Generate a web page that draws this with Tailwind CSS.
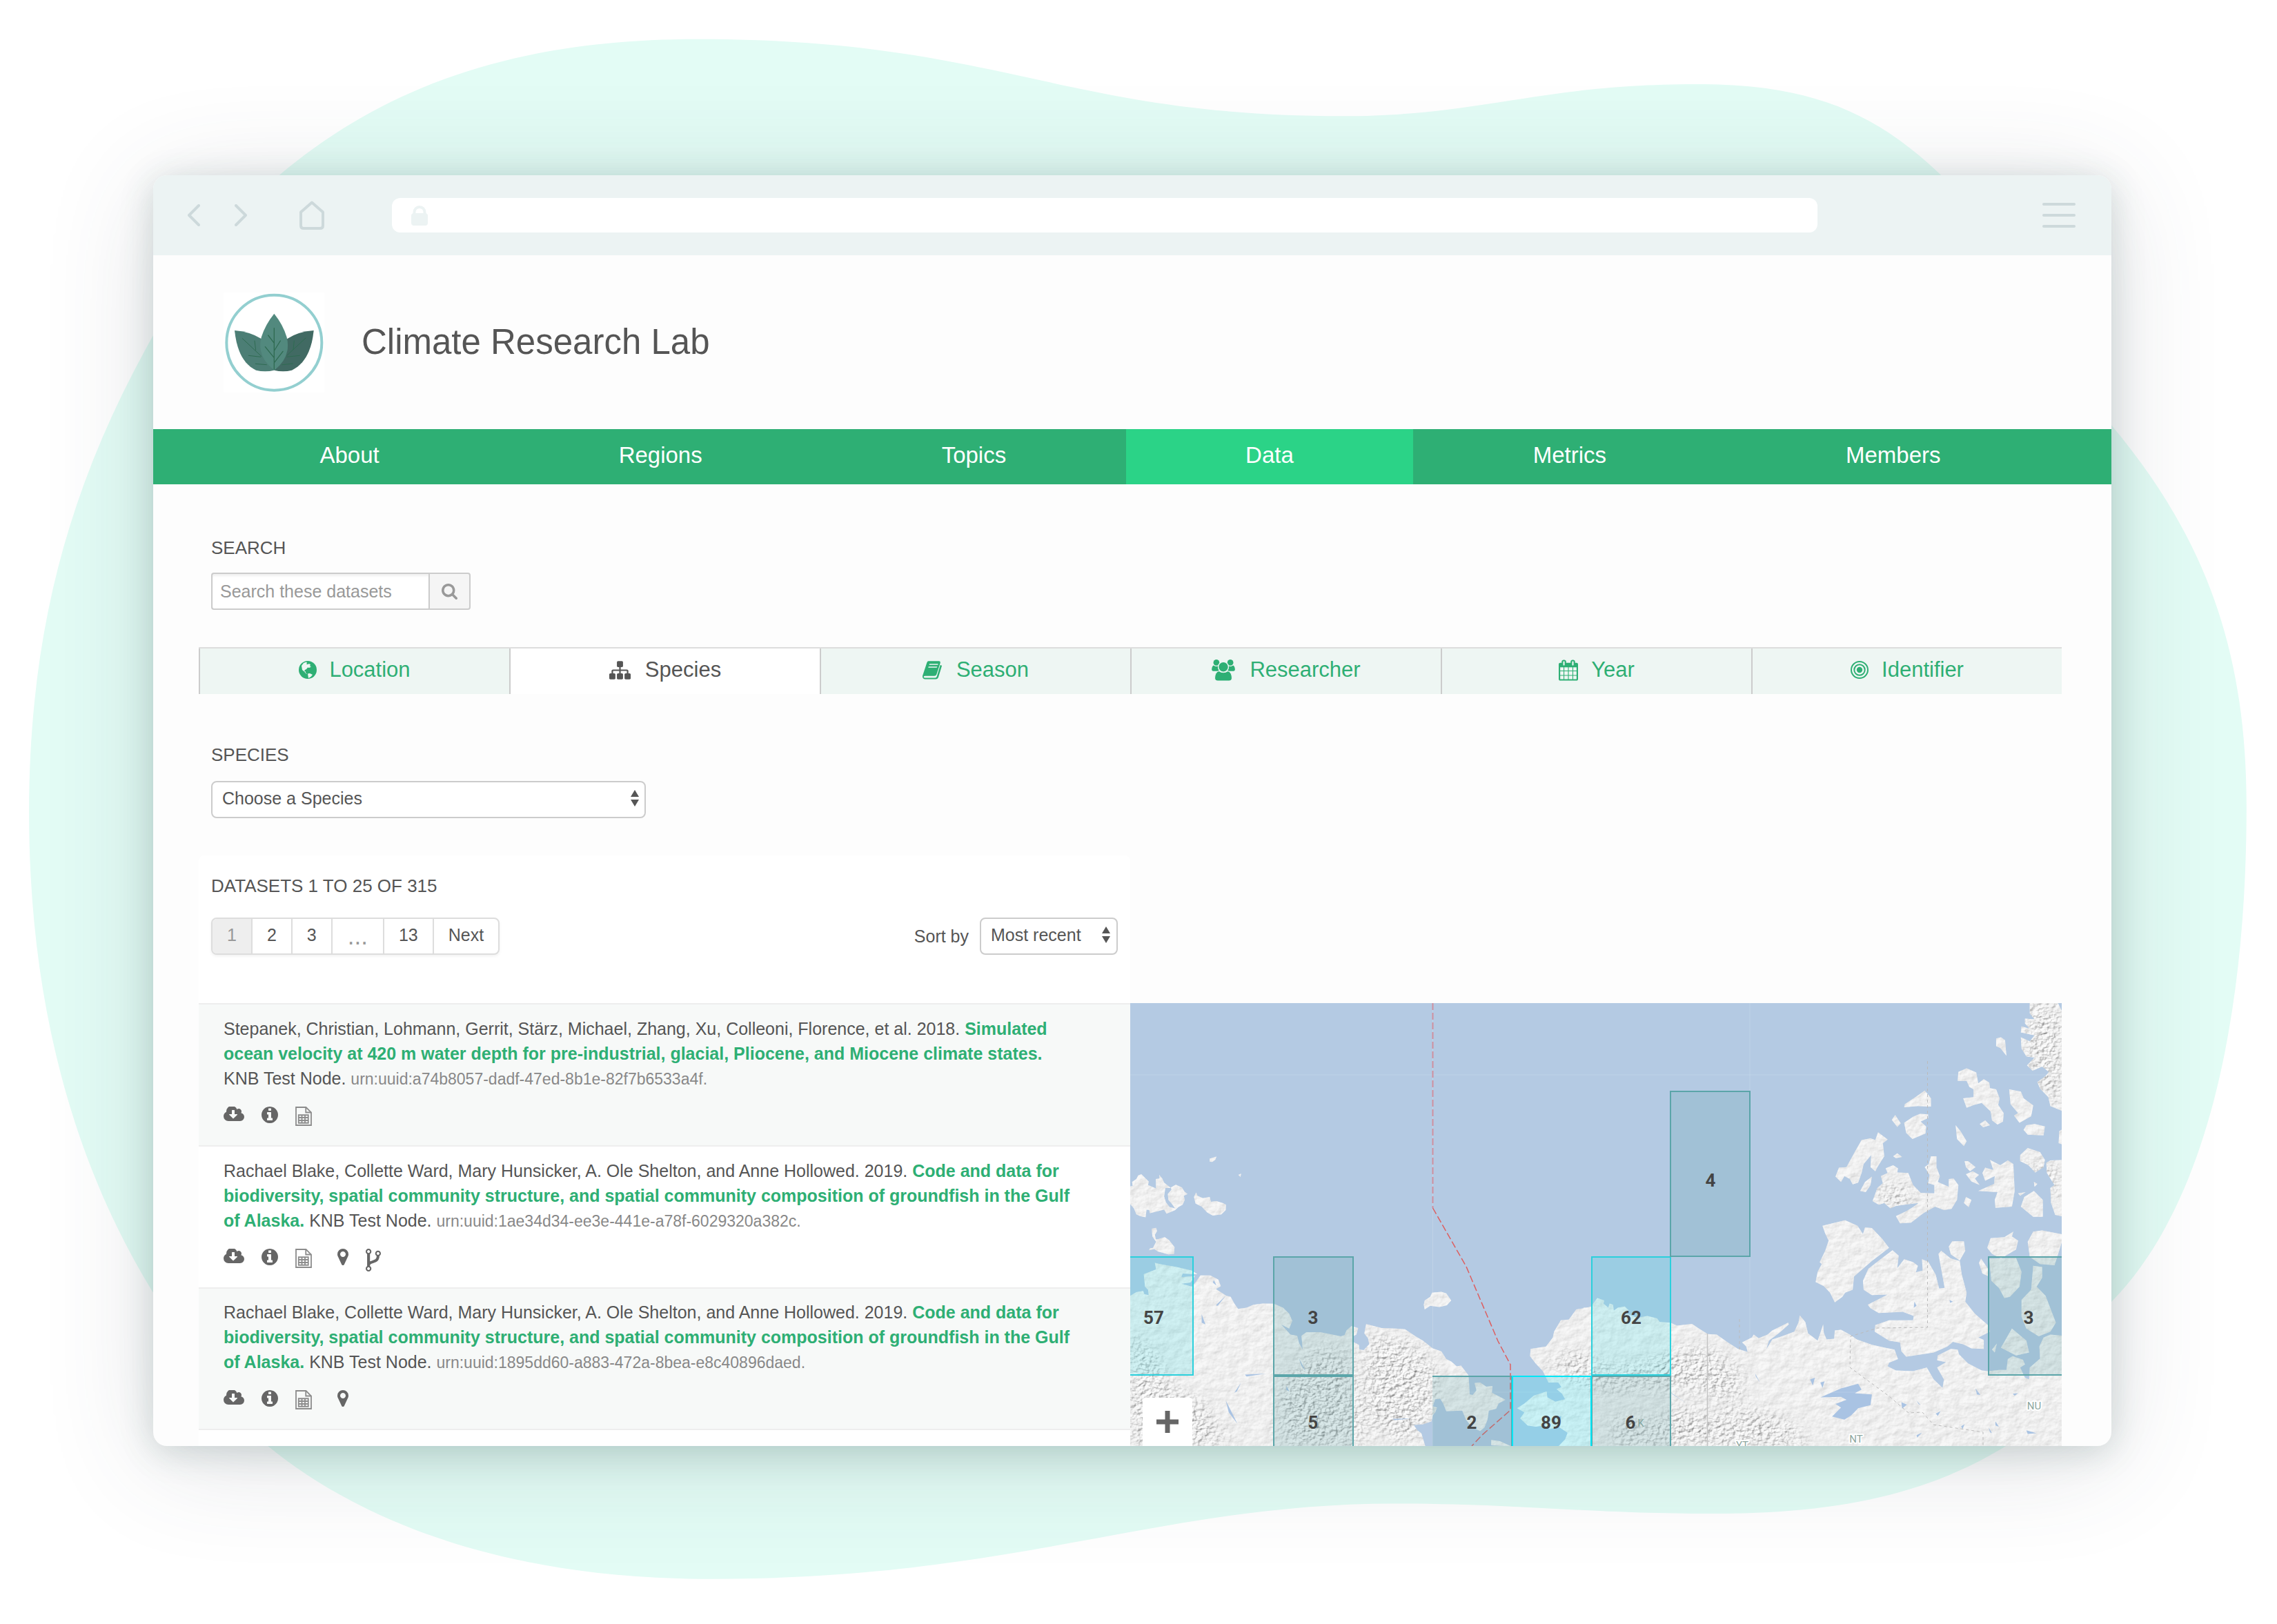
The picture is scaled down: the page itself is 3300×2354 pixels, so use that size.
<!DOCTYPE html>
<html lang="en">
<head>
<meta charset="utf-8">
<meta name="viewport" content="width=device-width, initial-scale=1">
<title>Climate Research Lab</title>
<script src="https://cdn.jsdelivr.net/npm/@tailwindcss/browser@4"></script>
</head>
<body class="bg-white text-[#555555] font-['Liberation_Sans',Arial,sans-serif] text-[25px] leading-[36px]">

<!-- Shared icon shapes -->
<svg class="hidden" aria-hidden="true">
  <symbol id="i-cloud" viewBox="-64 256 1920 1280"><path fill="currentColor" d="M1216 928q0-14-9-23t-23-9h-224v-352q0-13-9.500-22.500t-22.500-9.500h-192q-13 0-22.500 9.500t-9.500 22.500v352h-224q-13 0-22.500 9.500t-9.500 22.500q0 14 9 23l352 352q9 9 23 9t23-9l351-351q10-12 10-24zm640 224q0 159-112.500 271.500t-271.500 112.500h-1088q-185 0-316.500-131.500t-131.500-316.500q0-130 70-240t188-165q-2-30-2-43 0-212 150-362t362-150q156 0 285.500 87t188.500 231q71-62 166-62 106 0 181 75t75 181q0 76-41 138 130 31 213.500 135.500t83.500 238.500z"/></symbol>
  <symbol id="i-info" viewBox="128 128 1536 1536"><path fill="currentColor" d="M1152 1376v-160q0-14-9-23t-23-9h-96v-512q0-14-9-23t-23-9h-320q-14 0-23 9t-9 23v160q0 14 9 23t23 9h96v320h-96q-14 0-23 9t-9 23v160q0 14 9 23t23 9h448q14 0 23-9t9-23zm-128-896v-160q0-14-9-23t-23-9h-192q-14 0-23 9t-9 23v160q0 14 9 23t23 9h192q14 0 23-9t9-23zm640 416q0 209-103 385.500t-279.500 279.500-385.500 103-385.500-103-279.500-279.500-103-385.500 103-385.500 279.500-279.500 385.500-103 385.500 103 279.500 279.500 103 385.500z"/></symbol>
  <symbol id="i-file" viewBox="0 0 24 28"><g fill="none" stroke="#8c8c8c" stroke-width="1.800"><path d="M1 1h14.500l7.500 7.500v18.500H1z"/><path d="M15.250 1v7.500h8"/><path d="M4.750 12.250h14v11.500h-14zM4.750 16h14M4.750 20h14M9.500 12.250v11.500M14 12.250v11.500"/></g></symbol>
  <symbol id="i-pin" viewBox="384 128 1024 1536"><path fill="currentColor" d="M1152 640q0-106-75-181t-181-75-181 75-75 181 75 181 181 75 181-75 75-181zm256 0q0 109-33 179l-364 774q-16 33-47.500 52t-67.500 19-67.500-19-46.500-52l-365-774q-33-70-33-179 0-212 150-362t362-150 362 150 150 362z"/></symbol>
  <symbol id="i-fork" viewBox="384 128 1024 1536"><path fill="currentColor" d="M672 1472q0-40-28-68t-68-28-68 28-28 68 28 68 68 28 68-28 28-68zm0-1152q0-40-28-68t-68-28-68 28-28 68 28 68 68 28 68-28 28-68zm640 128q0-40-28-68t-68-28-68 28-28 68 28 68 68 28 68-28 28-68zm96 0q0 52-26 96.500t-70 69.500q-2 287-226 414-67 38-203 81-128 40-169.500 71t-41.500 100v26q44 25 70 69.500t26 96.500q0 80-56 136t-136 56-136-56-56-136q0-52 26-96.500t70-69.500v-820q-44-25-70-69.500t-26-96.500q0-80 56-136t136-56 136 56 56 136q0 52-26 96.500t-70 69.500v497q54-26 154-57 55-17 87.500-29.500t70.500-31 59-39.500 40.500-51 28-69.500 8.500-91.500q-44-25-70-69.500t-26-96.500q0-80 56-136t136-56 136 56 56 136z"/></symbol>
  <symbol id="i-updown" viewBox="0 0 12 24"><path fill="#555" d="M6 0l6 10H0zM6 24L0 14h12z"/></symbol>
</svg>

<div class="relative isolate min-h-screen overflow-hidden pt-[254px] pb-[258px] pl-[222px] pr-[240px]">

  <!-- Backdrop blob -->
  <svg class="absolute inset-0 -z-10 h-full w-full" viewBox="0 0 1568 1119" preserveAspectRatio="none" aria-hidden="true">
    <path fill="#e3fcf5" d="M192 121 C262 62 350 27 480 27 C690 27 730 80 925 80 C1020 80 1060 58 1168 58 C1245 58 1290 76 1337 121 C1385 166 1405 236 1454 293 C1520 372 1547 450 1547 556 C1547 700 1520 830 1454 897 C1428 940 1410 972 1382 996 C1330 1028 1270 1043 1180 1043 C1090 1043 1050 1036 960 1036 C800 1036 700 1088 490 1088 C350 1088 250 1050 184 996 C150 960 135 930 105 890 C50 800 20 690 20 560 C20 430 50 330 105 232 C130 190 155 155 192 121Z"/>
  </svg>

  <div class="overflow-hidden rounded-[20px] bg-[#fdfdfd] shadow-[0_8px_50px_rgba(40,80,75,0.2),0_20px_160px_rgba(60,70,90,0.16)]">

    <!-- Browser toolbar -->
    <div class="flex h-[116px] items-center bg-[#ecf3f3] pl-[50px] pr-[52px] text-[#cdd9db]">
      <button type="button" aria-label="Back"><svg class="h-8 w-[18px]" viewBox="0 0 18 32" fill="none" stroke="currentColor" stroke-width="4" stroke-linecap="round" stroke-linejoin="round"><path d="M16 2L2 16l14 14"/></svg></button>
      <button type="button" aria-label="Forward" class="ml-[50px]"><svg class="h-8 w-[18px]" viewBox="0 0 18 32" fill="none" stroke="currentColor" stroke-width="4" stroke-linecap="round" stroke-linejoin="round"><path d="M2 2l14 14L2 30"/></svg></button>
      <button type="button" aria-label="Home" class="ml-[76px]"><svg class="h-[42px] w-9" viewBox="0 0 36 42" fill="none" stroke="currentColor" stroke-width="4" stroke-linejoin="round"><path d="M18 2.500L2 16.500V36q0 4 4 4h24q4 0 4-4V16.500z"/></svg></button>
      <div class="ml-[98px] mr-[326px] flex h-[50px] flex-1 items-center rounded-xl bg-white pl-7">
        <svg class="h-[30px] w-6" viewBox="0 0 24 30" fill="none"><rect y="12" width="24" height="18" rx="4" fill="#ecf3f3"/><path d="M4.500 16V10.500a7.500 7.500 0 0 1 15 0V16" stroke="#ecf3f3" stroke-width="4"/></svg>
        <input type="text" aria-label="Address" class="h-full flex-1 px-4 outline-none">
      </div>
      <button type="button" aria-label="Menu" class="flex w-12 flex-col gap-3"><span class="h-1 rounded-full bg-current"></span><span class="h-1 rounded-full bg-current"></span><span class="h-1 rounded-full bg-current"></span></button>
    </div>

    <!-- Site header -->
    <header class="flex h-[252px] items-center gap-[54px] pl-[102px]">
      <svg class="h-[145px] w-[146px]" viewBox="41 40 438 435" role="img" aria-label="Leaf logo">
        <rect x="41" y="40" width="438" height="435" fill="#fff"/>
        <circle cx="261" cy="258" r="207" fill="#fff" stroke="#93cfd0" stroke-width="12"/>
        <path fill="#416a63" d="M433 205Q365 210 318 241L261 378Q300 388 338 378C395 350 425 290 433 205Z"/>
        <path fill="#4c7e75" d="M89 205Q155 210 205 241L261 378Q222 388 182 378C125 350 98 290 89 205Z"/>
        <path fill="#52897e" d="M261 132Q300 180 316 235Q336 320 262 378Q184 320 205 235Q222 180 261 132Z"/>
        <g fill="none" stroke="#2f6b52" stroke-width="4" stroke-linecap="round"><path d="M261 195V374M261 260L235 226M261 324L222 276M262 292L288 250M262 344L299 296"/><path d="M123 240L206 318M181 290L176 250M202 320L150 314M228 354L180 350" stroke-width="3"/><path d="M398 238L316 314M344 288L348 250M316 320L372 314M296 354L342 349" stroke-width="3"/></g>
      </svg>
      <h1 class="text-[51px] leading-[60px]">Climate Research Lab</h1>
    </header>

    <!-- Main navigation -->
    <nav class="flex h-20 bg-[#2eaf74] pl-[68px] pr-[74px] text-[33px] leading-[40px] text-white">
      <a href="#" class="flex flex-auto items-center justify-center pb-1">About</a>
      <a href="#" class="flex flex-auto items-center justify-center pb-1">Regions</a>
      <a href="#" class="flex flex-auto items-center justify-center pb-1">Topics</a>
      <a href="#" aria-current="page" class="flex flex-auto items-center justify-center bg-[#2bd387] pb-1">Data</a>
      <a href="#" class="flex flex-auto items-center justify-center pb-1">Metrics</a>
      <a href="#" class="flex flex-auto items-center justify-center pb-1">Members</a>
    </nav>

    <main class="pt-[76px] pl-[66px] pr-[72px]">
      <!-- Search -->
      <form class="px-[18px]">
        <label for="q" class="mb-5 block text-[26px] leading-8">SEARCH</label>
        <div class="flex h-[54px]">
          <input id="q" type="text" placeholder="Search these datasets" class="w-[315px] rounded-l border-2 border-r-0 border-[#cccccc] bg-white pl-[11px] shadow-[inset_0_3px_3px_rgba(0,0,0,0.06)] outline-none placeholder:text-[#999999]">
          <button type="submit" aria-label="Search" class="flex w-[61px] items-center justify-center rounded-r border-2 border-[#cccccc] bg-[#f5f5f5] text-[#999999]">
            <svg class="h-[23px] w-[23px]" viewBox="64 128 1664 1664"><path fill="currentColor" d="M1216 832q0-185-131.500-316.500t-316.500-131.500-316.500 131.500-131.500 316.500 131.500 316.500 316.500 131.500 316.500-131.500 131.500-316.500zm512 832q0 52-38 90t-90 38q-54 0-90-38l-343-342q-179 124-399 124-143 0-273.500-55.500t-225-150-150-225-55.500-273.500 55.500-273.500 150-225 225-150 273.500-55.500 273.500 55.500 225 150 150 225 55.500 273.500q0 220-124 399l343 343q37 37 37 90z"/></svg>
          </button>
        </div>
      </form>

      <!-- Filter tabs -->
      <div role="tablist" class="mt-[54px] grid h-[68px] grid-cols-6 border-t-2 border-[#dddddd] text-[31px] leading-[40px] text-[#2eaf74]">
        <button type="button" role="tab" class="flex items-center justify-center gap-[18px] border-l-2 border-[#cccccc] bg-[#eef6f3] pb-1">
          <svg class="h-[26px] w-[26px]" viewBox="0 0 26 26"><circle cx="13" cy="13" r="13" fill="currentColor"/><path fill="#eef6f3" d="M4 7l3-4 4-1.500 1 1.500-1 1.500 2 .5 2-1 2 1.500-1 2 2 1-3 1.500-2-.5-2 2.500-2 1-1 2 2 .5 0 2 1.500.5L11 19l-3-3.500L5 13z"/><path fill="#eef6f3" d="M13 18.500l3-.5 4 2-2.500 3L14 25z"/></svg>Location</button>
        <button type="button" role="tab" aria-selected="true" class="flex items-center justify-center gap-[21px] border-l-2 border-[#cccccc] bg-white pb-1 text-[#555555]">
          <svg class="h-[27px] w-[31px]" viewBox="0 128 1792 1536"><path fill="currentColor" d="M1792 1248v320q0 40-28 68t-68 28h-320q-40 0-68-28t-28-68v-320q0-40 28-68t68-28h96v-192h-512v192h96q40 0 68 28t28 68v320q0 40-28 68t-68 28h-320q-40 0-68-28t-28-68v-320q0-40 28-68t68-28h96v-192h-512v192h96q40 0 68 28t28 68v320q0 40-28 68t-68 28h-320q-40 0-68-28t-28-68v-320q0-40 28-68t68-28h96v-192q0-52 38-90t90-38h512v-192h-96q-40 0-68-28t-28-68v-320q0-40 28-68t68-28h320q40 0 68 28t28 68v320q0 40-28 68t-68 28h-96v192h512q52 0 90 38t38 90v192h96q40 0 68 28t28 68z"/></svg>Species</button>
        <button type="button" role="tab" class="flex items-center justify-center gap-[21px] border-l-2 border-[#cccccc] bg-[#eef6f3] pb-1">
          <svg class="h-[27px] w-7" viewBox="0 0 84 80"><path fill="currentColor" d="M26 0h46q7 1 5 9L61 58q-2 7-10 7H10q-6 1-5 5 1 3 6 3h44q5 0 7-5L77 18q4-1 7 3L69 70q-3 9-12 9H12Q-1 78 0 65L19 7Q21 0 26 0z"/><path fill="#eef6f3" d="M30 12h38l-1 5H29zM26 24h38l-2 5H25z"/></svg>Season</button>
        <button type="button" role="tab" class="flex items-center justify-center gap-[21px] border-l-2 border-[#cccccc] bg-[#eef6f3] pb-1">
          <svg class="h-[31px] w-[34px]" viewBox="0 0 100 92"><g fill="currentColor"><circle cx="20" cy="13" r="13"/><circle cx="80" cy="13" r="13"/><path d="M8 25q12 8 20 2-3 16 8 23H10Q0 50 0 42q1-14 8-17zM92 25q-12 8-20 2 3 16-8 23h26q10 0 10-8-1-14-8-17z"/></g><circle cx="50" cy="32" r="22" fill="currentColor" stroke="#eef6f3" stroke-width="4"/><path fill="currentColor" stroke="#eef6f3" stroke-width="3" d="M31 49q19 13 38 0 17 4 18 30 0 13-12 13H25q-12 0-12-13 1-26 18-30z"/></svg>Researcher</button>
        <button type="button" role="tab" class="flex items-center justify-center gap-[19px] border-l-2 border-[#cccccc] bg-[#eef6f3] pb-1">
          <svg class="h-[31px] w-7" viewBox="64 0 1664 1792"><path fill="currentColor" d="M192 1664h288v-288h-288v288zm352 0h320v-288h-320v288zm-352-352h288v-320h-288v320zm352 0h320v-320h-320v320zm-352-384h288v-288h-288v288zm736 736h320v-288h-320v288zm-384-736h320v-288h-320v288zm768 736h288v-288h-288v288zm-384-352h320v-320h-320v320zm-352-864v-288q0-13-9.500-22.500t-22.500-9.500h-64q-13 0-22.500 9.500t-9.500 22.500v288q0 13 9.500 22.500t22.500 9.500h64q13 0 22.500-9.500t9.500-22.500zm736 864h288v-320h-288v320zm-384-384h320v-288h-320v288zm384 0h288v-288h-288v288zm32-480v-288q0-13-9.500-22.500t-22.500-9.500h-64q-13 0-22.500 9.500t-9.500 22.500v288q0 13 9.500 22.500t22.500 9.500h64q13 0 22.500-9.500t9.500-22.500zm384-64v1280q0 52-38 90t-90 38h-1408q-52 0-90-38t-38-90v-1280q0-52 38-90t90-38h128v-96q0-66 47-113t113-47h64q66 0 113 47t47 113v96h384v-96q0-66 47-113t113-47h64q66 0 113 47t47 113v96h128q52 0 90 38t38 90z"/></svg>Year</button>
        <button type="button" role="tab" class="flex items-center justify-center gap-[19px] border-l-2 border-[#cccccc] bg-[#eef6f3] pb-1">
          <svg class="h-[26px] w-[26px]" viewBox="0 0 26 26" fill="none" stroke="currentColor" stroke-width="2"><circle cx="13" cy="13" r="12"/><circle cx="13" cy="13" r="7.700"/><circle cx="13" cy="13" r="4.200" fill="currentColor" stroke="none"/></svg>Identifier</button>
      </div>

      <!-- Species picker -->
      <div class="px-[18px] pt-[72px]">
        <label for="species" class="mb-[22px] block text-[26px] leading-8">SPECIES</label>
        <div class="relative w-[630px]">
          <select id="species" class="h-[54px] w-full appearance-none rounded-lg border-2 border-[#cccccc] bg-white pb-1 pl-[14px] outline-none"><option>Choose a Species</option></select>
          <svg class="pointer-events-none absolute top-[13px] right-[10px] h-6 w-3" aria-hidden="true"><use href="#i-updown"/></svg>
        </div>
      </div>

      <!-- Results and map -->
      <div class="mt-[54px] grid grid-cols-2">
        <section class="rounded-t-lg bg-white">
          <div class="px-[18px] pt-7 pb-[70px]">
            <h2 class="mb-[30px] text-[26px] leading-8">DATASETS 1 TO 25 OF 315</h2>
            <div class="flex items-center justify-between">
              <nav aria-label="Pages" class="flex h-[54px] divide-x-2 divide-[#dddddd] overflow-hidden rounded-lg border-2 border-[#dddddd] bg-white shadow-[0_2px_4px_rgba(0,0,0,0.06)]">
                <a href="#" aria-current="page" class="flex items-center bg-[#eeeeee] px-[21px] pb-1 text-[#999999]">1</a>
                <a href="#" class="flex items-center px-[21px] pb-1">2</a>
                <a href="#" class="flex items-center px-[21px] pb-1">3</a>
                <span class="flex items-center px-[22px] text-[35px] text-[#999999]">...</span>
                <a href="#" class="flex items-center px-[21px] pb-1">13</a>
                <a href="#" class="flex items-center px-[21px] pb-1">Next</a>
              </nav>
              <div class="flex items-center gap-4">
                <label for="sort">Sort by</label>
                <div class="relative w-[200px]">
                  <select id="sort" class="h-[54px] w-full appearance-none rounded-lg border-2 border-[#cccccc] bg-white pb-1 pl-[14px] outline-none"><option>Most recent</option></select>
                  <svg class="pointer-events-none absolute top-[13px] right-[11px] h-6 w-3" aria-hidden="true"><use href="#i-updown"/></svg>
                </div>
              </div>
            </div>
          </div>

          <ul class="border-b-2 border-[#eeeeee]">
            <li class="border-t-2 border-[#eeeeee] bg-[#f7f9f8] px-9 pt-[17px] pb-6">
              <p>Stepanek, Christian, Lohmann, Gerrit, Stärz, Michael, Zhang, Xu, Colleoni, Florence, et al. 2018. <a href="#" class="font-bold text-[#2eaf74]">Simulated<br>ocean velocity at 420 m water depth for pre-industrial, glacial, Pliocene, and Miocene climate states.</a><br>KNB Test Node. <span class="text-[23px] leading-none text-[#888888]">urn:uuid:a74b8057-dadf-47ed-8b1e-82f7b6533a4f.</span></p>
              <div class="mt-[23px] flex h-8 items-start gap-[25px] text-[#666666]">
                <button type="button" aria-label="Download"><svg class="h-[22px] w-[30px]"><use href="#i-cloud"/></svg></button>
                <button type="button" aria-label="Details"><svg class="h-6 w-6"><use href="#i-info"/></svg></button>
                <button type="button" aria-label="Data table"><svg class="h-7 w-6"><use href="#i-file"/></svg></button>
              </div>
            </li>
            <li class="border-t-2 border-[#eeeeee] bg-white px-9 pt-[17px] pb-6">
              <p>Rachael Blake, Collette Ward, Mary Hunsicker, A. Ole Shelton, and Anne Hollowed. 2019. <a href="#" class="font-bold text-[#2eaf74]">Code and data for<br>biodiversity, spatial community structure, and spatial community composition of groundfish in the Gulf<br>of Alaska.</a> KNB Test Node. <span class="text-[23px] leading-none text-[#888888]">urn:uuid:1ae34d34-ee3e-441e-a78f-6029320a382c.</span></p>
              <div class="mt-[23px] flex h-8 items-start gap-[25px] text-[#666666]">
                <button type="button" aria-label="Download"><svg class="h-[22px] w-[30px]"><use href="#i-cloud"/></svg></button>
                <button type="button" aria-label="Details"><svg class="h-6 w-6"><use href="#i-info"/></svg></button>
                <button type="button" aria-label="Data table"><svg class="h-7 w-6"><use href="#i-file"/></svg></button>
                <button type="button" aria-label="Location" class="ml-3"><svg class="h-6 w-4"><use href="#i-pin"/></svg></button>
                <button type="button" aria-label="Provenance"><svg class="h-[33px] w-[22px]"><use href="#i-fork"/></svg></button>
              </div>
            </li>
            <li class="border-t-2 border-[#eeeeee] bg-[#f7f9f8] px-9 pt-4 pb-6">
              <p>Rachael Blake, Collette Ward, Mary Hunsicker, A. Ole Shelton, and Anne Hollowed. 2019. <a href="#" class="font-bold text-[#2eaf74]">Code and data for<br>biodiversity, spatial community structure, and spatial community composition of groundfish in the Gulf<br>of Alaska.</a> KNB Test Node. <span class="text-[23px] leading-none text-[#888888]">urn:uuid:1895dd60-a883-472a-8bea-e8c40896daed.</span></p>
              <div class="mt-[23px] flex h-8 items-start gap-[25px] text-[#666666]">
                <button type="button" aria-label="Download"><svg class="h-[22px] w-[30px]"><use href="#i-cloud"/></svg></button>
                <button type="button" aria-label="Details"><svg class="h-6 w-6"><use href="#i-info"/></svg></button>
                <button type="button" aria-label="Data table"><svg class="h-7 w-6"><use href="#i-file"/></svg></button>
                <button type="button" aria-label="Location" class="ml-3"><svg class="h-6 w-4"><use href="#i-pin"/></svg></button>
              </div>
            </li>
          </ul>
          <div class="h-[23px]"></div>
        </section>

        <section class="flex flex-col pt-[214px]" aria-label="Map">
          <div class="relative flex-1 overflow-hidden bg-[#b4cae3]">
            <svg class="absolute inset-0 h-full w-full" viewBox="0 0 1350 642" preserveAspectRatio="xMinYMin slice" role="img" aria-label="Dataset counts by region">
              <defs>
                <path id="west" transform="matrix(.44643 0 0 .43367 -17.86 -13.88)" d="M40 645L48 643 46 630 60 620 66 608 76 604 88 616 100 628 98 640 124 652 123 620 135 618 134 606 144 618 150 632 162 642 172 650 154 650 150 678 156 698 168 714 186 718 176 704 164 690 162 670 174 656 172 648 188 639 208 648 216 662 226 670 214 676 217 690 210 706 196 714 186 724 158 736 150 722 120 730 104 734 102 724 93 722 90 748 72 744 60 738 52 718 40 704ZM247 680L254 665 258 676 276 684 298 680 302 696 320 694 340 700 351 706 350 724 336 738 308 742 290 732 272 712 252 702ZM298 552L320 545 316 556 306 563 298 562ZM391 606L400 602 398 613ZM110 786L124 783 127 794 120 806 123 822 134 820 152 814 166 824 184 848 182 870 164 872 130 862 118 854 101 858 104 852 114 850 124 830 112 812ZM40 1010L60 998 82 994 86 1005 100 1008 98 990 88 980 84 938 104 930 124 922 120 900 144 906 190 914 240 926 258 938 210 936 206 948 250 944 236 966 206 970 240 980 252 966 268 942 300 942 326 956 334 978 318 988 352 1010 366 1014 378 1036 390 1054 418 1050 440 1040 470 1036 506 1037 536 1050 556 1070 566 1094 556 1120 530 1106 548 1126 560 1140 582 1144 588 1168 600 1190 596 1144 612 1132 656 1132 724 1146 736 1142 742 1126 758 1112 780 1118 774 1140 764 1146 766 1166 782 1174 784 1190 798 1192 816 1172 812 1152 800 1136 806 1105 856 1118 900 1120 932 1122 966 1146 990 1160 1022 1186 1050 1196 1066 1222 1082 1230 1100 1246 1114 1244 1138 1276 1140 1300 1142 1340 1152 1342 1164 1326 1158 1302 1176 1300 1196 1314 1216 1312 1214 1334 1258 1358 1236 1370 1228 1388 1204 1394 1200 1424 1190 1450 1176 1462 1150 1450 1130 1424 1118 1394 1066 1396 1056 1370 1046 1354 1030 1356 1022 1380 1036 1384 1030 1400 1022 1410 1018 1430 990 1440 960 1442 972 1460 985 1470 1000 1520L40 1520ZM993 1040L996 1026 1014 1014 1020 1000 1050 997 1066 1002 1082 1026 1068 1042 1044 1048 1014 1044 996 1056ZM1212 1492L1240 1496 1276 1513 1212 1510ZM1560 1040L1538 1048 1488 1056 1464 1090 1438 1092 1416 1130 1412 1150 1390 1180 1340 1188 1338 1212 1356 1236 1380 1262 1398 1300 1430 1300 1440 1316 1424 1322 1442 1338 1452 1356 1420 1364 1394 1350 1392 1330 1350 1344 1318 1372 1296 1386 1320 1400 1306 1420 1330 1444 1356 1448 1384 1444 1402 1456 1430 1448 1460 1468 1452 1490 1424 1520 1560 1520Z"/>
                <path id="east" transform="matrix(.49745 0 0 .43367 662 -13.88)" d="M0 1050L12 1046 30 1018 50 1026 48 1036 62 1050 66 1036 76 1040 78 1060 90 1050 110 1046 122 1060 116 1070 146 1084 176 1078 204 1086 212 1098 243 1100 262 1110 306 1104 326 1120 352 1138 378 1140 410 1166 440 1188 468 1198 464 1180 452 1166 480 1150 486 1140 500 1152 526 1140 540 1126 586 1100 588 1106 560 1134 530 1160 522 1190 540 1156 568 1146 604 1130 616 1100 620 1076 636 1098 644 1136 660 1150 672 1160 680 1134 688 1106 690 1134 698 1156 720 1154 722 1126 740 1124 766 1140 786 1156 830 1174 868 1184 896 1190 906 1222 880 1234 876 1246 900 1260 950 1262 990 1250 1010 1290 1036 1318 1040 1290 1020 1250 1046 1232 1020 1226 1022 1210 1060 1188 1080 1190 1084 1206 1110 1236 1150 1260 1170 1262 1200 1258 1222 1258 1226 1222 1240 1212 1270 1224 1276 1240 1262 1250 1276 1284 1288 1290 1290 1250 1320 1220 1318 1180 1330 1150 1350 1140 1400 1145V1530H-10V1050ZM806 990L804 960 820 920 860 884 890 858 908 876 904 918 924 888 950 898 964 910 958 932 978 926 976 888 994 896 1016 940 1026 986 1042 984 1024 870 1032 860 1060 886 1086 894 1092 940 1106 1000 1102 1030 1130 1070 1168 1108 1174 1130 1140 1150 1156 1158 1156 1188 1120 1186 1096 1172 1066 1164 1050 1180 1010 1200 930 1214 916 1196 912 1166 880 1160 838 1130 840 1108 880 1092 950 1092 952 1078 920 1064 850 1068 826 1052 818 1040 876 1006 830 1008ZM686 776L752 758 788 776 804 804 810 782 830 784 860 820 880 850 830 894 800 924 778 946 774 990 752 1000 744 1014 722 1032 708 1000 690 978 666 964 672 930 684 904 678 898 694 860 704 826 694 802ZM724 612L734 582 756 580 780 530 800 490 826 484 840 490 848 464 876 488 862 500 866 544 846 580 840 594 826 580 828 540 806 570 800 600 790 632 774 638 766 620 750 610 740 630ZM832 694L846 650 862 634 856 610 876 600 870 584 892 574 906 584 904 598 936 600 950 640 972 666 1012 668 1012 640 994 634 998 606 984 580 996 570 1002 544 1018 544 1018 580 1028 610 1022 630 1054 646 1054 620 1068 618 1082 640 1078 690 1062 720 1040 724 1014 712 980 734 944 766 912 768 900 744 930 728 952 712 966 700 936 704 900 710 884 718 866 700 850 706ZM926 370L960 344 984 324 1002 350 1002 378 964 376 924 380ZM924 432L950 412 970 402 994 404 994 416 972 428 988 444 986 468 948 486 930 466ZM888 422L898 406 914 434 904 446ZM796 660L810 630 830 612 826 640 812 664ZM892 544L904 534 918 546 900 550ZM1080 292L1082 262 1106 250 1134 264 1140 300 1156 286 1172 298 1174 316 1192 320 1202 350 1198 372 1214 400 1212 428 1196 438 1180 424 1176 394 1150 366 1128 372 1106 382 1096 350 1126 346 1126 320 1114 312 1106 292ZM1230 320L1264 328 1272 350 1300 374 1294 410 1260 432 1244 408 1256 400 1234 370ZM1144 436L1160 424 1174 440 1154 447ZM1074 440L1088 460 1106 494 1098 510 1078 486ZM1272 456L1280 440 1304 436 1334 444 1330 474 1284 472ZM1192 150L1206 146 1218 156 1222 208 1204 182 1192 176ZM1290 32L1372 32 1384 60 1400 100V400L1350 376 1344 346 1320 318 1312 296 1336 276 1346 262 1326 244 1298 258 1282 240 1304 214 1280 210 1266 184 1264 146 1290 160 1304 140 1264 130 1266 110 1290 118 1276 100 1276 84 1304 86 1290 66ZM1262 540L1284 516 1320 530 1334 556 1330 580 1306 598 1286 574 1262 560ZM1338 566L1350 558 1390 556V746L1364 740 1352 700 1350 650 1362 640 1340 600ZM1100 560L1110 560 1132 580 1116 594 1104 580ZM1104 604L1124 594 1142 606 1130 618 1144 640 1120 628ZM1140 660L1186 636 1188 610 1160 626 1152 600 1160 582 1184 590 1174 556 1204 574 1226 558 1242 570 1246 660 1238 712 1190 716 1188 690 1196 664ZM1098 700L1104 680 1120 690 1112 714ZM1264 712L1274 680 1302 660 1328 690 1328 746 1300 746ZM1166 850L1176 818 1216 814 1242 796 1238 812 1256 826 1250 856 1226 872 1206 886 1180 870ZM1284 830L1300 796 1326 792 1390 806 1370 880 1362 908 1320 904 1290 880ZM1142 900L1148 886 1168 920 1168 944 1152 936ZM1172 886L1250 884 1266 930 1260 980 1232 1014 1216 1018 1200 984 1178 960ZM1300 910L1326 914 1326 950 1310 980 1336 1010 1366 1100 1350 1130 1316 1146 1280 1120 1266 1080 1266 1024 1294 990ZM1238 1120L1280 1160 1288 1200 1250 1210 1206 1184ZM1054 846L1064 828 1098 828 1102 860 1086 892 1060 872ZM1376 460L1390 450V506L1374 500ZM1180 1190L1194 1170 1188 1200ZM1302 630L1312 636 1304 646ZM1256 668L1278 664 1262 676Z"/>
                <clipPath id="land"><use href="#west"/><use href="#east"/></clipPath>
                <filter id="plain" x="0" y="0" width="1350" height="642" filterUnits="userSpaceOnUse" color-interpolation-filters="sRGB">
                  <feTurbulence type="fractalNoise" baseFrequency=".06 .08" numOctaves="4" seed="4"/>
                  <feDiffuseLighting surfaceScale="1.200" diffuseConstant="1.080" lighting-color="#fff" result="l"><feDistantLight azimuth="225" elevation="60"/></feDiffuseLighting>
                  <feComposite in="l" in2="SourceAlpha" operator="in"/>
                </filter>
                <filter id="peaks" x="0" y="0" width="1350" height="642" filterUnits="userSpaceOnUse" color-interpolation-filters="sRGB">
                  <feGaussianBlur in="SourceAlpha" stdDeviation="14" result="a"/>
                  <feTurbulence type="fractalNoise" baseFrequency=".15 .2" numOctaves="3" seed="9"/>
                  <feDiffuseLighting surfaceScale="2.600" diffuseConstant="1.080" lighting-color="#fff" result="l"><feDistantLight azimuth="225" elevation="60"/></feDiffuseLighting>
                  <feComposite in="l" in2="a" operator="in"/>
                </filter>
              </defs>

              <!-- Land with shaded relief -->
              <g fill="#f0f0f0"><use href="#west"/><use href="#east"/></g>
              <g clip-path="url(#land)">
                <g opacity=".5"><rect width="1350" height="642" filter="url(#plain)"/></g>
                <g filter="url(#peaks)" opacity=".7">
                  <path d="M0 480L30 500 60 560 110 580 130 642H0ZM0 600L100 590 150 642H0ZM215 560L270 500 315 505 340 642H220ZM345 480L400 490 440 520 440 590 400 642 340 600ZM600 520L650 505 690 530 760 520 800 500 850 505 890 540 880 580 800 555 690 560 640 545ZM780 580L830 600 900 590 960 610 990 642H780ZM1300 0H1350V160L1320 120 1300 80ZM1080 270L1120 260 1140 290 1090 300ZM1290 225L1350 240 1345 290ZM700 600L790 610V642H700Z"/>
                </g>
              </g>

              <!-- Lakes -->
              <path fill="#a9c3e3" transform="matrix(.49745 0 0 .43367 662 -13.88)" d="M680 1350L740 1320 790 1304 800 1324 780 1336 830 1340 826 1376 790 1386 770 1410 750 1424 714 1414 740 1384 724 1372 756 1358 740 1348ZM650 1290L664 1284 658 1310ZM680 1300L692 1296 686 1318ZM1132 1320L1146 1342 1136 1340ZM954 1030L960 1044 952 1050ZM916 1366L932 1374 918 1388ZM960 1360L972 1376 966 1372ZM1016 1404L1030 1396 1022 1412ZM960 1476L976 1468 962 1484ZM1280 1460L1310 1470 1284 1472ZM1090 1446L1100 1440 1094 1456ZM1190 1430L1200 1448 1190 1444ZM1240 1338L1256 1336 1246 1344ZM240 1330L290 1370 250 1340ZM490 1270L504 1300 492 1280ZM1170 1450L1180 1470 1174 1466ZM1056 1024L1066 1030 1058 1034Z"/>
              <path fill="#a9c3e3" transform="matrix(.44643 0 0 .43367 -17.86 -13.88)" d="M350 1360L388 1438 360 1400ZM412 1274L480 1270 418 1280ZM272 1072L284 1106 272 1100ZM312 958L320 976 308 966ZM378 1334L400 1300 386 1330ZM890 1422L952 1420 900 1426ZM548 1312L556 1330 546 1324ZM588 1220L610 1262 596 1244ZM1420 1420L1440 1412 1436 1424ZM318 1042L350 1010 324 1044Z"/>

              <!-- Graticule and borders -->
              <path d="M0 104H1350M0 564H1350M438.500 0V642M898 0V642" stroke="#fff" stroke-opacity=".16" fill="none"/>
              <path d="M1155.500 84V470L1083 471 1044 483 1043 528 1100 570 1128 594 1148 593 1164 611 1236 622V642M883 458V502" stroke="#bbb" stroke-dasharray="4 4" fill="none"/>
              <path d="M836.500 479V642" stroke="#c4c4c4" stroke-width="1.500" fill="none"/>
              <path d="M438.500 0V297" stroke="#cf8f9f" stroke-width="2" stroke-dasharray="10 4" fill="none"/>
              <path d="M438.500 297L487 382 533 490 551 524V590L510 626 495 642" stroke="#dd5f60" stroke-width="1.500" stroke-dasharray="10 4" fill="none"/>

              <!-- Place names -->
              <g font-family="Roboto, sans-serif" font-size="15" fill="#8ea79f" stroke="#fff" stroke-width="4" stroke-linejoin="round" paint-order="stroke" text-anchor="middle">
                <text x="1310" y="589">NU</text><text x="1052" y="637">NT</text><text x="887" y="646">YT</text><text x="740" y="614" stroke="none">K</text>
              </g>

              <!-- Count cells -->
              <g stroke-width="2">
                <g fill="#3cd9e3" fill-opacity=".21" stroke="#2bd0dc"><path d="M-4 368H91V539H-4z"/><path d="M669 368h114v171H669z"/></g>
                <g fill="#55a2a4" fill-opacity=".2" stroke="#5ba5a9"><path d="M208 368h115v171H208zM208 541h115v110H208zM669 541h114v110H669zM783 128h115v239H783zM1244 368h115v171h-115z"/><path d="M438 541h115v110H438z" stroke="none"/><path d="M438 541h115v110" fill="none"/></g>
                <path d="M554 541h114v110H554z" fill="#22e4f4" fill-opacity=".21" stroke="#00e6f6"/>
              </g>
              <g font-family="Roboto, sans-serif" font-size="26" font-weight="700" fill="#444" text-anchor="middle">
                <text x="34" y="465">57</text><text x="265" y="465">3</text><text x="265" y="617">5</text><text x="495" y="617">2</text><text x="610" y="617">89</text><text x="726" y="465">62</text><text x="725" y="617">6</text><text x="841" y="266">4</text><text x="1302" y="465">3</text>
              </g>
            </svg>
            <button type="button" aria-label="Zoom in" class="absolute bottom-0 left-[18px] flex h-[70px] w-[72px] items-center justify-center rounded-t bg-white"><svg class="h-8 w-8" viewBox="0 0 32 32"><path d="M16 0v32M0 16h32" stroke="#666" stroke-width="7"/></svg></button>
          </div>
        </section>
      </div>
    </main>
  </div>
</div>
</body>
</html>
